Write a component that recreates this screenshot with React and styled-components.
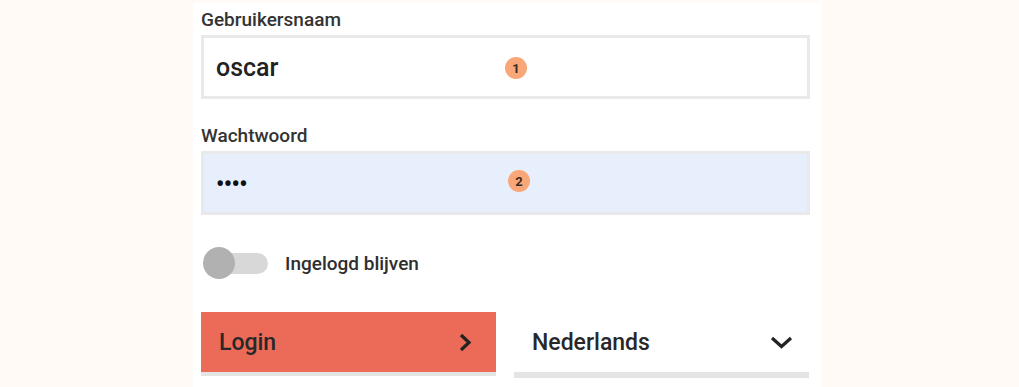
import React from 'react';
import styled, { createGlobalStyle } from 'styled-components';

const GlobalStyle = createGlobalStyle`
  body {
    margin: 0;
    background: #fffaf6;
    font-family: Roboto, "Liberation Sans", sans-serif;
  }
`;

const Page = styled.div`
  height: 387px;
  padding: 3px 0 0 193px;
  box-sizing: border-box;
  overflow: hidden;
`;

const Panel = styled.div`
  width: 628px;
  min-height: 400px;
  background: #fff;
  padding: 6px 11px 0 8px;
  box-sizing: border-box;
  display: flex;
  flex-direction: column;
`;

const Label = styled.div`
  font-size: 19px;
  line-height: 22px;
  font-weight: 500;
  color: #333;
  margin-top: ${props => (props.$first ? '0' : '26px')};
  margin-bottom: 4px;
`;

const Field = styled.div`
  position: relative;
  height: 64px;
  box-sizing: border-box;
  border: 3px solid #e9e9e9;
  background: ${props => props.$bg || '#fff'};
  display: flex;
  align-items: center;
  padding-left: 12px;
`;

const Value = styled.span`
  font-size: 25px;
  font-weight: 500;
  color: #222;
`;

const Dots = styled.span`
  font-size: 23px;
  letter-spacing: -0.5px;
  font-weight: 700;
  color: #111;
  margin-top: 2px;
`;

const Badge = styled.span`
  position: absolute;
  left: ${props => props.$x}px;
  top: ${props => props.$y}px;
  width: 22px;
  height: 22px;
  border-radius: 50%;
  background: #f9a679;
  color: #3b2b22;
  font-size: 13px;
  font-weight: 700;
  display: flex;
  align-items: center;
  justify-content: center;
`;

const ToggleRow = styled.div`
  margin-top: 32px;
  height: 32px;
  display: flex;
  align-items: center;
`;

const Switch = styled.div`
  position: relative;
  width: 67px;
  height: 32px;
  display: flex;
  align-items: center;
`;

const Track = styled.div`
  margin-left: 6px;
  width: 61px;
  height: 21px;
  border-radius: 11px;
  background: #d8d8d8;
`;

const Knob = styled.div`
  position: absolute;
  left: 2px;
  top: 0;
  width: 32px;
  height: 32px;
  border-radius: 50%;
  background: #b1b1b1;
`;

const ToggleLabel = styled.span`
  margin-left: 17px;
  font-size: 19px;
  font-weight: 500;
  color: #2e2e2e;
`;

const Actions = styled.div`
  margin-top: 33px;
  display: grid;
  grid-template-columns: 295px 295px;
  column-gap: 18px;
`;

const ActionButton = styled.div`
  height: 60px;
  display: flex;
  align-items: center;
  justify-content: space-between;
  padding: 0 ${props => props.$padRight}px 0 18px;
  font-size: 23px;
  font-weight: 500;
  color: #282828;
  background: ${props => props.$bg};
  box-shadow: 0 ${props => props.$bar}px 0 #e4e4e4;
`;

const Chevron = styled.svg`
  display: block;
  fill: none;
  stroke: #232323;
  stroke-width: 3.2;
`;

export default function App() {
  return (
    <Page>
      <GlobalStyle />
      <Panel>
        <Label $first>Gebruikersnaam</Label>
        <Field>
          <Value>oscar</Value>
          <Badge $x={301} $y={19}>1</Badge>
        </Field>

        <Label>Wachtwoord</Label>
        <Field $bg="#e8effc">
          <Dots>••••</Dots>
          <Badge $x={304} $y={16}>2</Badge>
        </Field>

        <ToggleRow>
          <Switch>
            <Track />
            <Knob />
          </Switch>
          <ToggleLabel>Ingelogd blijven</ToggleLabel>
        </ToggleRow>

        <Actions>
          <ActionButton $bg="#eb6b58" $padRight={24} $bar={4}>
            <span>Login</span>
            <Chevron width="13" height="19" viewBox="0 0 13 19">
              <polyline points="2,2 10,9.5 2,17" />
            </Chevron>
          </ActionButton>
          <ActionButton $bg="#fff" $padRight={16} $bar={6}>
            <span>Nederlands</span>
            <Chevron width="23" height="13" viewBox="0 0 23 13">
              <polyline points="2,2 11.5,10.5 21,2" />
            </Chevron>
          </ActionButton>
        </Actions>
      </Panel>
    </Page>
  );
}
